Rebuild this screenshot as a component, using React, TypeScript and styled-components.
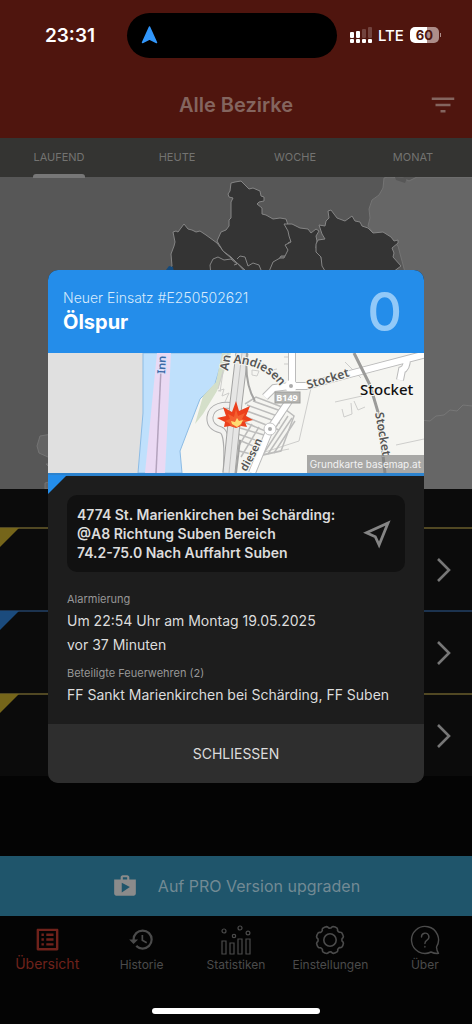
import React from "react";
import styled, { createGlobalStyle, css } from "styled-components";
import { MdFilterList, MdHistory, MdListAlt, MdShop } from "react-icons/md";

const GlobalStyle = createGlobalStyle`
  *, *::before, *::after { box-sizing: border-box; }
  body {
    margin: 0;
    background: #040404;
    font-family: Inter, "Liberation Sans", sans-serif;
    color: #dcdcdc;
  }
  button { font: inherit; color: inherit; border: 0; padding: 0; background: none; cursor: pointer; }
  svg { display: block; flex: none; }
  h1, h2, p { margin: 0; }
`;

const Screen = styled.div`
  position: relative;
  display: flex;
  flex-direction: column;
  min-height: 100vh;
`;

const Header = styled.header`
  background: #4f150e;
`;

const StatusBar = styled.div`
  display: grid;
  grid-template-columns: 1fr 210px 1fr;
  align-items: center;
  height: 70px;
  padding-right: 8px;
  color: #fff;
`;

const Clock = styled.time`
  padding-left: 13px;
  text-align: center;
  font-size: 19px;
  font-weight: 600;
`;

const Island = styled.div`
  display: flex;
  align-items: center;
  height: 45px;
  padding: 0 14px;
  border-radius: 23px;
  background: #000;
`;

const StatusIcons = styled.div`
  display: flex;
  align-items: center;
  gap: 6px;
  padding-left: 13px;
  font-size: 15px;
  font-weight: 500;
`;

const BatteryWrap = styled.div`
  display: flex;
  align-items: center;
  gap: 1px;
`;

const Battery = styled.div`
  width: 29px;
  height: 16px;
  border-radius: 5px;
  background: linear-gradient(90deg, #fff 60%, #ad8d89 60%);
  color: #4f150e;
  font-size: 13px;
  font-weight: 700;
  line-height: 16px;
  text-align: center;
`;

const BatteryTip = styled.div`
  width: 1px;
  height: 4px;
  background: #ad8d89;
`;

const TitleBar = styled.div`
  display: grid;
  grid-template-columns: 1fr auto 1fr;
  align-items: center;
  height: 68px;
  padding: 2px 14px 0;
  color: #84655f;
`;

const Title = styled.h1`
  grid-column: 2;
  font-size: 20px;
  font-weight: 600;
`;

const FilterButton = styled.button`
  justify-self: end;
`;

const Tabs = styled.nav`
  display: grid;
  grid-template-columns: repeat(4, 1fr);
  height: 39px;
  background: #343432;
`;

const Tab = styled.button<{ $active?: boolean }>`
  display: flex;
  justify-content: center;
  color: #737371;
  font-size: 11px;
  line-height: 38px;

  span {
    position: relative;
  }

  ${(p) =>
    p.$active &&
    css`
      span::after {
        content: "";
        position: absolute;
        left: 0;
        right: 0;
        bottom: -1px;
        height: 4px;
        border-radius: 3px 3px 0 0;
        background: #777;
      }
    `}
`;

const RegionMap = styled.svg`
  width: 100%;
  height: 312px;
  background: #575757;
`;

const List = styled.div`
  padding-top: 38px;
  background: #0b0b0b;
`;

const ListRow = styled.button<{ $color: string; $line: string }>`
  position: relative;
  display: flex;
  align-items: center;
  justify-content: flex-end;
  width: 100%;
  height: 83px;
  padding-right: 21px;
  border-top: 2px solid ${(p) => p.$line};
  color: #777;

  &::before {
    content: "";
    position: absolute;
    top: -1px;
    left: 0;
    width: 19px;
    height: 19px;
    background: ${(p) => p.$color};
    clip-path: polygon(0 0, 100% 0, 0 100%);
  }
`;

const Spacer = styled.div`
  flex: 1;
`;

const Upgrade = styled.button`
  display: flex;
  align-items: center;
  justify-content: center;
  gap: 20px;
  height: 60px;
  background: #1f556b;
  color: #728a94;
  font-size: 16px;

  svg { color: #8b8b8b; }
`;

const BottomNav = styled.nav`
  display: grid;
  grid-template-columns: repeat(5, 1fr);
  height: 92px;
  padding-top: 8px;
`;

const NavItem = styled.button<{ $active?: boolean }>`
  display: flex;
  flex-direction: column;
  align-items: center;
  justify-content: flex-start;
  color: ${(p) => (p.$active ? "#6f221b" : "#4b4b4b")};
  font-size: ${(p) => (p.$active ? 14 : 12)}px;
  line-height: ${(p) => (p.$active ? 18 : 20)}px;
`;

const NavIcon = styled.span`
  display: grid;
  place-items: center;
  height: 31px;
`;

const HomeIndicator = styled.div`
  width: 168px;
  height: 6px;
  margin: 0 auto 10px;
  border-radius: 3px;
  background: #fff;
`;

const Overlay = styled.div`
  position: absolute;
  inset: 0;
  display: flex;
  align-items: center;
  padding: 29px 48px 0;
`;

const Dialog = styled.section`
  flex: 1;
  min-width: 0;
  overflow: hidden;
  border-radius: 10px;
  background: #1d1d1d;
`;

const DialogHeader = styled.header`
  display: flex;
  align-items: center;
  justify-content: space-between;
  height: 83px;
  padding: 0 22px 0 15px;
  background: #248dea;
`;

const Eyebrow = styled.p`
  font-size: 14px;
  font-weight: 300;
  line-height: 22px;
  color: #d6eafc;
`;

const DialogTitle = styled.h2`
  font-size: 20px;
  font-weight: 700;
  line-height: 27px;
  color: #fff;
`;

const Count = styled.span`
  font-size: 54px;
  font-weight: 500;
  line-height: 60px;
  color: #92c9f8;
`;

const MapPreview = styled.div`
  position: relative;
  border-bottom: 3px solid #2c82cd;

  > svg { width: 100%; height: 120px; }
`;

const Attribution = styled.span`
  position: absolute;
  right: 0;
  bottom: 0;
  padding: 0 3px;
  background: rgba(128, 128, 128, 0.66);
  color: #f2f2f2;
  font-size: 10px;
  line-height: 18px;
`;

const DialogBody = styled.div`
  position: relative;
  padding: 19px 19px 17px;

  &::before {
    content: "";
    position: absolute;
    top: -1px;
    left: 0;
    width: 19px;
    height: 19px;
    background: #248dea;
    clip-path: polygon(0 0, 100% 0, 0 100%);
  }
`;

const AddressButton = styled.button`
  display: flex;
  align-items: center;
  justify-content: space-between;
  width: 100%;
  margin-bottom: 17px;
  padding: 10px 14px 10px 10px;
  border-radius: 10px;
  background: #111;
  text-align: left;
  font-size: 14px;
  font-weight: 600;
  line-height: 19px;

  svg { color: #858585; }
`;

const Detail = styled.div`
  & + & { margin-top: 6px; }
`;

const DetailLabel = styled.p`
  font-size: 11px;
  line-height: 20px;
  color: #979797;
`;

const DetailValue = styled.p`
  font-size: 14px;
  line-height: 24px;
`;

const CloseButton = styled.button`
  display: block;
  width: 100%;
  height: 59px;
  background: #2e2e2e;
  font-size: 14px;
`;

const SignalIcon = () => (
  <svg width="22" height="17" viewBox="0 0 22 17" fill="#fff" aria-hidden="true">
    <rect y="5" width="4" height="6" rx="1" />
    <rect x="6" y="4" width="4" height="7" rx="1" />
    <rect x="12" y="2" width="4" height="9" rx="1" opacity=".2" />
    <rect x="18" width="4" height="11" rx="1" opacity=".2" />
    {[0, 6, 12, 18].map((x) => (
      <rect key={x} x={x} y="12" width="4" height="4" rx="1" />
    ))}
  </svg>
);

const Chevron = () => (
  <svg width="14" height="24" viewBox="0 0 14 24" fill="none" stroke="currentColor" strokeWidth="2.6" aria-hidden="true">
    <path d="M1 1 12 12 1 23" />
  </svg>
);

const StatsIcon = () => (
  <svg width="32" height="30" viewBox="0 0 32 30" fill="none" stroke="currentColor" strokeWidth="1.2" aria-hidden="true">
    <path d="M2 16h4v13H2zM10 18h4v11h-4zM18 14h4v15h-4zM26 14h4v15h-4z" />
    <circle cx="4" cy="6" r="2" />
    <circle cx="14" cy="11" r="1.7" />
    <circle cx="20" cy="3" r="2" />
    <circle cx="28" cy="8" r="1.9" />
  </svg>
);

const GearIcon = () => {
  const teeth = Array.from({ length: 8 }, (_, i) => i * 45);
  const point = (r: number, deg: number) => {
    const a = (deg * Math.PI) / 180;
    return `${(15 + r * Math.sin(a)).toFixed(2)} ${(15 - r * Math.cos(a)).toFixed(2)}`;
  };
  const d = teeth
    .map((t, i) => {
      const start = t + 22;
      return `${i ? "L" : "M"}${point(13.8, start - 9)} Q${point(14.2, start)} ${point(13.8, start + 9)} Q${point(13.4, start + 14)} ${point(12.2, start + 16)} Q${point(11.6, start + 22.5)} ${point(12.2, start + 29)} Q${point(13.4, start + 31)} ${point(13.8, start + 36)}`;
    })
    .join(" ");
  return (
    <svg width="30" height="30" viewBox="0 0 30 30" fill="none" stroke="currentColor" strokeWidth="1.6" strokeLinejoin="round" aria-hidden="true">
      <path d={d + "Z"} />
      <circle cx="15" cy="15" r="6.2" />
    </svg>
  );
};

const HelpIcon = () => (
  <svg width="30" height="30" viewBox="0 0 30 30" fill="none" stroke="currentColor" strokeWidth="1.4" strokeLinecap="round" strokeLinejoin="round" aria-hidden="true">
    <path d="M26.5 22A13.5 13.5 0 1 0 21 27c2 1 5 1.600 7.500 1.400-1.200-1.700-1.900-4-2-6.400z" />
    <path d="M11.500 12a3.700 3.700 0 1 1 5.500 3.100c-1.500.9-2.100 1.800-2.100 3.400M14.900 21.500v.5" />
  </svg>
);

const SendIcon = () => (
  <svg width="28" height="30" viewBox="0 0 28 30" fill="none" stroke="currentColor" strokeWidth="2.800" aria-hidden="true">
    <path d="M25 4 3.500 13.800l8.800 3.900 3.800 8.300z" />
  </svg>
);

const districts = [
  "M173 232l3-1 2 1 6-8 4 5 4 1 4 2 4-1 6 4 11 8 7 9 13 11 13 14 18 16H150l18-21 4-6-1-12 3-8 1-4z",
  "M235 182l-4 1-1 8-2 3 1 3 4 1-2 4v16l-2 2v6l-3 4-5 2-4 9 6 10 8 6 5 5 9 8 10 14h16l1-18 5-4 4-6h5l4-8-2-5 6-3-2-6-1-5-2-1-3-9-6-1-7 1-7-4-4-1v-6l-5-4 2-2 5-1v-4l-3-1-1-5-7-3-4 1-8-8z",
  "M284 224h8l8 4 8 1 3 4 5-4 3 2-3 5 1 5-1 7 4 5 2 8 12 15v16h-66v-18l5-12 7-4h4l4-8-3-5 6-3-2-6-1-5z",
  "M319 225l6 1 1-5 3-3-1-7 3-1 6 8 8 3 7-5 3 5 5 1 2 4 6 2 5 5 10-1 8 5 3 4 4-1v3l-6 5 2 5-1 4 8 9-8 6v22h-60l-3-15-8-13-1-9-5-5v-8l2-4 7-1-3-5z",
];

const AustriaMap = () => (
  <RegionMap viewBox="0 177 472 312" preserveAspectRatio="xMidYMid slice" role="img" aria-label="Bezirkskarte">
    <path d="M384 178l-1 10-4 7-7 5-3 9 1 9-2 8 6 8 14 4 10 8 8 30v40l-4 190h80V177h-65l-8 4-6-3-15-1z" fill="#666" stroke="#747474" />
    <path d="M395 177l12 1-2 5-9-3z" fill="#575757" />
    <g fill="#343434" stroke="#858585" strokeWidth="1">
      {districts.map((d) => (
        <path key={d} d={d} />
      ))}
      <path d="M211 276l-1-11 3-6 5-2 6 3 7-1 6 5-3 1M237 259l3-3 5 1 3 9 5-3 6 2 4 10" fill="none" />
    </g>
    <path d="M166 270l3-4 4 1 2 10h-14z" fill="#144a7c" />
    <path d="M40 436l12-2 6 20-10 3-9-4-2-7zM46 464h6l-1 5zM45 483l8-2v8h-8z" fill="#646464" stroke="#747474" />
    <path d="M420 420l10 1 6-5 8-1 6-5 7 1 6-6 9 1" fill="none" stroke="#777" />
  </RegionMap>
);

const parkingRows = [
  "M247 405l33 12M244 410l36 13M241 415l38 15M239 420l31 13M253 401l28 10",
  "M240 428l24 7M238 434l20 7M239 440l14 6M252 424l-17 28M259 427l-18 30",
  "M284 414l-27 43M288 416l-26 40M292 418l-24 36M295 421l-21 32",
];

const LocationMap = () => (
  <svg viewBox="48 353 376 120" preserveAspectRatio="xMidYMid slice" role="img" aria-label="Karte des Einsatzortes">
    <defs>
      <path id="andiesen" d="M233 363Q268 365 284 392" />
      <path id="andiesenSouth" d="M246 472Q258 452 265 434" />
    </defs>
    <path d="M-152 353h776v120h-776z" fill="#f5f5f1" />
    <path d="M-152 353h295v60l-5 60h-290z" fill="#e0e0e0" />
    <path d="M143 353h81l-9 31-15 15-12 31-8 21 2 22h-44l5-60z" fill="#bfe0fc" stroke="#8cbbe4" />
    <path d="M157 353h14l-6 120h-20z" fill="#ead9f3" />
    <path d="M161 369l-5 104" stroke="#b3a3bd" strokeWidth="1.500" />
    <path d="M222 353h9l-14 38-14 23-8 10 8-28 13-14z" fill="#d4dfc9" />
    <g fill="none" stroke="#cdcdcb" strokeWidth="1">
      <path d="M311 388l-12 53-37 12M396 445l28-6M249 457l40-8M263 363l4 8 10-2M284 357h6v7h-6M252 370l7 1-2 5-5-1zM223 372l-3 20" />
      <path d="M335 402l27-6 4-6M342 409l2 8 8-3-1-11M354 401l4 9 7-3M361 378l-16-16M228 353l-10 36" />
      <path d="M218 391l6-2-2 7 7-3-4 9" />
    </g>
    <g stroke="#bdbdbc" strokeWidth="1.500">
      {parkingRows.map((d) => (
        <path key={d} d={d} />
      ))}
      <path d="M245 404l11-7 26 10 12 9-13 35-22 5-20-5" fill="none" />
    </g>
    <g fill="none">
      <path d="M241 407q-29-6-31 10-1 10 11 13 8 3 5 43" stroke="#adadad" strokeWidth="7" />
      <path d="M241 407q-29-6-31 10-1 10 11 13 8 3 5 43" stroke="#f2f2f0" strokeWidth="5" />
      <path d="M242 353l-6 50-7 70" stroke="#a3a3a2" strokeWidth="13" />
      <path d="M242 353l-6 50-7 70" stroke="#e6e6e5" strokeWidth="11" />
      <path d="M242 353l-6 50-7 70" stroke="#c2c2c1" strokeWidth="1" />
      <path d="M247 353q-3 30 8 48M240 440l-4 33" stroke="#a3a3a2" strokeWidth="2" />
      <path d="M292 353v33M290 386l-16 2-9 9M290 386h16l40-11 84-22M289 401l-19 28-18 44M407 358q0 10-5 12l-2 10" stroke="#bbb" strokeWidth="8" />
      <path d="M292 353v33M290 386l-16 2-9 9M290 386h16l40-11 84-22M289 401l-19 28-18 44M407 358q0 10-5 12l-2 10" stroke="#fff" strokeWidth="6" />
      <path d="M354 353l16 32 8 27 7 61" stroke="#9b9b99" strokeWidth="3" />
      <circle cx="291" cy="386" r="6" fill="#fff" />
      <circle cx="270" cy="429" r="6" fill="#fff" stroke="#c3c3c3" />
    </g>
    <circle cx="291" cy="386" r="2" fill="#aaa" />
    <circle cx="270" cy="429" r="2" fill="#aaa" />
    <g fontFamily="'Noto Sans', sans-serif" fill="#555" fontWeight="600" fontSize="12" stroke="#f5f5f1" strokeWidth="2" paintOrder="stroke">
      <text><textPath href="#andiesen">Andiesen</textPath></text>
      <text fontSize="11"><textPath href="#andiesenSouth">diesen</textPath></text>
      <text transform="translate(228 371) rotate(-80)">An</text>
      <text transform="translate(308 389) rotate(-17)">Stocket</text>
      <text transform="translate(375 413) rotate(80)">Stocket</text>
      <text transform="translate(165 374) rotate(-87)" fill="#3c69a6" fontSize="11" stroke="#dcdffa">Inn</text>
      <text x="360" y="395" fill="#111" fontSize="15" fontWeight="500">Stocket</text>
    </g>
    <rect x="275" y="392" width="25" height="11" fill="#b5b5b2" stroke="#9e9e9b" />
    <text x="287" y="401" fill="#fff" fontFamily="'Noto Sans', sans-serif" fontSize="9" fontWeight="700" textAnchor="middle">B149</text>
    <path d="M236 401l3 10 11-5-4 10 7 4-8 2 2 5-6-1-5 2-6-2-6 1 1-5-8-4 9-2-3-9 9 5z" fill="#ec401c" />
    <path d="M236 409l2 7 7-3-3 6 5 2-5 1-1 4-5 1-5-1-2-3-4-2 5-2-2-5 6 3z" fill="#f4602f" />
    <path d="M237 418l2 3 4-1-2 4-4 3-5-3-1-3 4 1z" fill="#ffdc73" />
  </svg>
);

const tabs = ["LAUFEND", "HEUTE", "WOCHE", "MONAT"];

const rows = [
  { color: "#75651a", line: "#514823" },
  { color: "#1b4b7d", line: "#1c334f" },
  { color: "#75651a", line: "#514823" },
];

const navItems = [
  { label: "Übersicht", icon: <MdListAlt size={29} /> },
  { label: "Historie", icon: <MdHistory size={27} /> },
  { label: "Statistiken", icon: <StatsIcon /> },
  { label: "Einstellungen", icon: <GearIcon /> },
  { label: "Über", icon: <HelpIcon /> },
];

export default function App() {
  return (
    <Screen>
      <GlobalStyle />
      <Header>
        <StatusBar>
          <Clock>23:31</Clock>
          <Island>
            <svg width="17" height="18" viewBox="0 0 17 18" aria-hidden="true">
              <path d="M8.500 1 15.500 16.500 8.500 13 1.500 16.500z" fill="#3297fb" stroke="#3297fb" strokeWidth="1.500" strokeLinejoin="round" />
            </svg>
          </Island>
          <StatusIcons>
            <SignalIcon />
            <span>LTE</span>
            <BatteryWrap>
              <Battery>60</Battery>
              <BatteryTip />
            </BatteryWrap>
          </StatusIcons>
        </StatusBar>
        <TitleBar>
          <Title>Alle Bezirke</Title>
          <FilterButton aria-label="Filter">
            <MdFilterList size={30} />
          </FilterButton>
        </TitleBar>
      </Header>
      <Tabs>
        {tabs.map((tab, i) => (
          <Tab key={tab} $active={i === 0}>
            <span>{tab}</span>
          </Tab>
        ))}
      </Tabs>
      <AustriaMap />
      <List>
        {rows.map((row, i) => (
          <ListRow key={i} $color={row.color} $line={row.line} aria-label={`Einsatz ${i + 1}`}>
            <Chevron />
          </ListRow>
        ))}
      </List>
      <Spacer />
      <Upgrade>
        <MdShop size={26} />
        Auf PRO Version upgraden
      </Upgrade>
      <BottomNav>
        {navItems.map((item, i) => (
          <NavItem key={item.label} $active={i === 0}>
            <NavIcon>{item.icon}</NavIcon>
            {item.label}
          </NavItem>
        ))}
      </BottomNav>
      <HomeIndicator />

      <Overlay>
        <Dialog role="dialog" aria-modal="true" aria-labelledby="dialog-title">
          <DialogHeader>
            <div>
              <Eyebrow>Neuer Einsatz #E250502621</Eyebrow>
              <DialogTitle id="dialog-title">Ölspur</DialogTitle>
            </div>
            <Count>0</Count>
          </DialogHeader>
          <MapPreview>
            <LocationMap />
            <Attribution>Grundkarte basemap.at</Attribution>
          </MapPreview>
          <DialogBody>
            <AddressButton>
              <span>
                4774 St. Marienkirchen bei Schärding:
                <br />
                @A8 Richtung Suben Bereich
                <br />
                74.2-75.0 Nach Auffahrt Suben
              </span>
              <SendIcon />
            </AddressButton>
            <Detail>
              <DetailLabel>Alarmierung</DetailLabel>
              <DetailValue>Um 22:54 Uhr am Montag 19.05.2025</DetailValue>
              <DetailValue>vor 37 Minuten</DetailValue>
            </Detail>
            <Detail>
              <DetailLabel>Beteiligte Feuerwehren (2)</DetailLabel>
              <DetailValue>FF Sankt Marienkirchen bei Schärding, FF Suben</DetailValue>
            </Detail>
          </DialogBody>
          <CloseButton>SCHLIESSEN</CloseButton>
        </Dialog>
      </Overlay>
    </Screen>
  );
}
